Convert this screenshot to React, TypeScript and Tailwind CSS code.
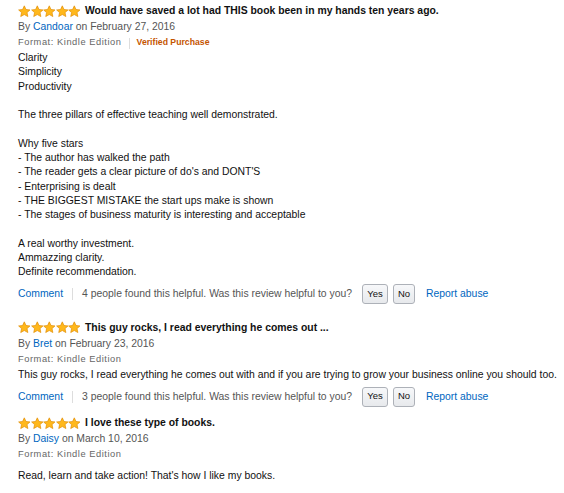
const font = { fontFamily: '"Liberation Sans", Arial, sans-serif' };

function Stars() {
  return (
    <span className="inline-flex shrink-0">
      {[0, 1, 2, 3, 4].map((i) => (
        <svg key={i} width="12.6" height="13" viewBox="0 0 24 24" className="block">
          <path
            d="M12 1.2l3.3 7 7.5.8-5.6 5.1 1.6 7.5L12 17.8l-6.8 3.8 1.6-7.5L1.2 9l7.5-.8z"
            fill="#ffb81c"
            stroke="#e08a00"
            strokeWidth="1.3"
            strokeLinejoin="round"
          />
        </svg>
      ))}
    </span>
  );
}

function Review({
  title,
  author,
  date,
  verified,
  body,
  helpful,
  bodyPad,
}: {
  title: string;
  author: string;
  date: string;
  verified?: boolean;
  body: string[];
  helpful?: number;
  bodyPad: string;
}) {
  return (
    <div>
      <div className="flex h-[16px] items-center gap-[4px]">
        <Stars />
        <span className="text-[10.4px] font-bold text-[#111]">{title}</span>
      </div>
      <div className="h-[16px] text-[10.4px] leading-[16px] text-[#555]">
        By <span className="text-[#0066c0]">{author}</span> on {date}
      </div>
      <div className="flex h-[16px] items-center text-[9.3px] text-[#666]">
        <span className="tracking-[0.55px]">Format: Kindle Edition</span>
        {verified && (
          <>
            <span className="mx-[7px] h-[11px] w-px bg-[#ddd]" />
            <span className="text-[8.7px] font-bold text-[#c45500]">Verified Purchase</span>
          </>
        )}
      </div>
      <div className={`text-[10.4px] leading-[14.3px] text-[#111] ${bodyPad}`}>
        {body.map((l, i) => (
          <div key={i} className="h-[14.3px] whitespace-pre">
            {l}
          </div>
        ))}
      </div>
      {helpful !== undefined && (
        <div className="mt-[4px] flex h-[21px] items-center text-[10.4px]">
          <span className="text-[#0066c0]">Comment</span>
          <span className="mx-[9px] h-[12px] w-px bg-[#ddd]" />
          <span className="text-[#555]">
            {helpful} people found this helpful. Was this review helpful to you?
          </span>
          <span className="ml-[10px] flex h-[20px] w-[26px] items-center justify-center rounded-[3px] border border-[#adb1b8] bg-gradient-to-b from-[#f7f8fa] to-[#e7e9ec] text-[9.5px] text-[#111]">
            Yes
          </span>
          <span className="ml-[5px] flex h-[20px] w-[22px] items-center justify-center rounded-[3px] border border-[#adb1b8] bg-gradient-to-b from-[#f7f8fa] to-[#e7e9ec] text-[9.5px] text-[#111]">
            No
          </span>
          <span className="ml-[11px] text-[#0066c0]">Report abuse</span>
        </div>
      )}
    </div>
  );
}

export default function App() {
  return (
    <div className="min-h-[493px] w-[564px] bg-white pl-[18px] pt-[3px]" style={font}>
      <Review
        title="Would have saved a lot had THIS book been in my hands ten years ago."
        author="Candoar"
        date="February 27, 2016"
        verified
        bodyPad="pt-0"
        body={[
          "Clarity",
          "Simplicity",
          "Productivity",
          " ",
          "The three pillars of effective teaching well demonstrated.",
          " ",
          "Why five stars",
          "- The author has walked the path",
          "- The reader gets a clear picture of do's and DONT'S",
          "- Enterprising is dealt",
          "- THE BIGGEST MISTAKE the start ups make is shown",
          "- The stages of business maturity is interesting and acceptable",
          " ",
          "A real worthy investment.",
          "Ammazzing clarity.",
          "Definite recommendation.",
        ]}
        helpful={4}
      />
      <div className="h-[15px]" />
      <Review
        title="This guy rocks, I read everything he comes out ..."
        author="Bret"
        date="February 23, 2016"
        bodyPad="pt-0"
        body={[
          "This guy rocks, I read everything he comes out with and if you are trying to grow your business online you should too.",
        ]}
        helpful={3}
      />
      <div className="h-[8px]" />
      <Review
        title="I love these type of books."
        author="Daisy"
        date="March 10, 2016"
        body={["Read, learn and take action! That's how I like my books."]}
        bodyPad="pt-[6px]"
      />
    </div>
  );
}
